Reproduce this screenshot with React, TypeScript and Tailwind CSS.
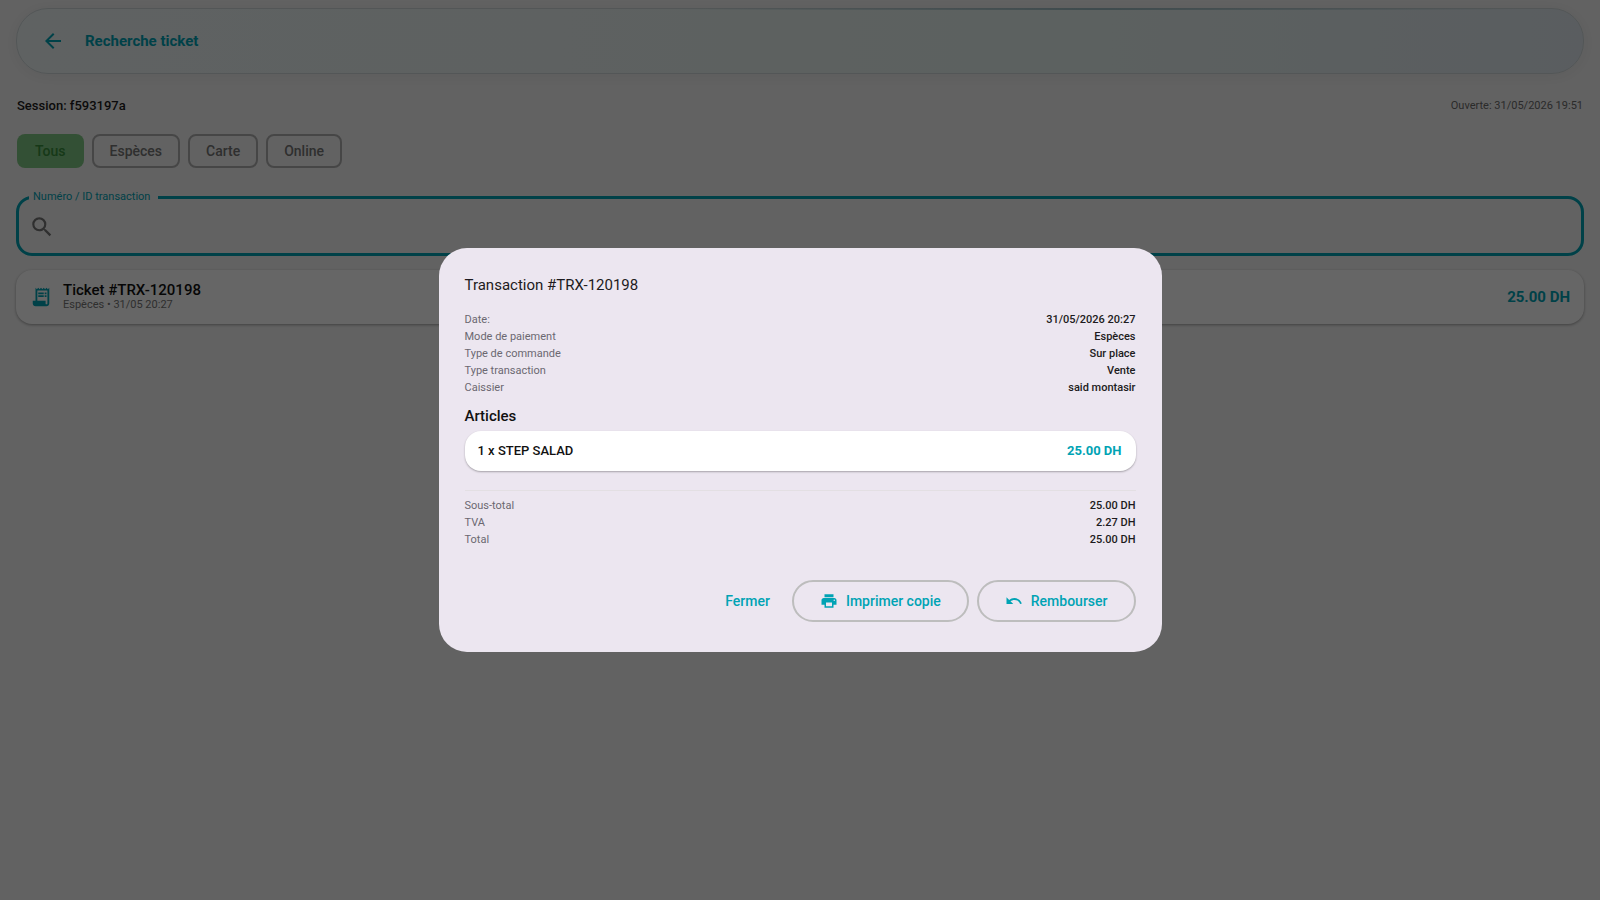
import React from "react";
import { MdArrowBack, MdPrint, MdReceiptLong, MdSearch, MdUndo } from "react-icons/md";

const filters = ["Tous", "Espèces", "Carte", "Online"];

const details = [
  ["Date:", "31/05/2026 20:27"],
  ["Mode de paiement", "Espèces"],
  ["Type de commande", "Sur place"],
  ["Type transaction", "Vente"],
  ["Caissier", "said montasir"],
];

const totals = [
  ["Sous-total", "25.00 DH"],
  ["TVA", "2.27 DH"],
  ["Total", "25.00 DH"],
];

function Rows({ rows }: { rows: string[][] }) {
  return (
    <dl className="text-[11px] leading-[17px]">
      {rows.map(([label, value]) => (
        <div key={label} className="flex justify-between">
          <dt className="text-[#6b6870]">{label}</dt>
          <dd className="font-medium text-[#1d1b20]">{value}</dd>
        </div>
      ))}
    </dl>
  );
}

function TransactionDialog() {
  return (
    <div className="fixed inset-0 z-10 flex items-center justify-center bg-black/60 p-4">
      <section
        role="dialog"
        aria-modal="true"
        aria-labelledby="dialog-title"
        className="w-full max-w-[723px] rounded-[28px] bg-[#ece6f0] px-[26px] pb-[30px] pt-[26px]"
      >
        <h2 id="dialog-title" className="text-[15px] leading-[22px] text-[#1d1b20]">
          Transaction #TRX-120198
        </h2>
        <div className="pt-[15px]">
          <Rows rows={details} />
        </div>
        <h3 className="pb-[5px] pt-[10px] text-[15px] font-medium leading-[20px] text-[#111111]">Articles</h3>
        <div className="flex h-10 items-center justify-between rounded-2xl bg-white pl-[13px] pr-[14px] text-[13px] shadow-[0_1px_2px_rgba(0,0,0,0.3)]">
          <span className="font-medium text-[#111111]">1 x STEP SALAD</span>
          <span className="font-bold text-[#00a3b4]">25.00 DH</span>
        </div>
        <hr className="mb-[6px] mt-[19px] border-[#e3dfe3]" />
        <Rows rows={totals} />
        <div className="flex items-center justify-end gap-2 pt-8 text-[14px] font-medium text-[#00a3b4]">
          <button className="h-[42px] px-[14px]">Fermer</button>
          <button className="flex h-[42px] items-center gap-2 rounded-full border-2 border-[#bdbdbd] px-[26px]">
            <MdPrint size={18} />
            Imprimer copie
          </button>
          <button className="flex h-[42px] items-center gap-2 rounded-full border-2 border-[#bdbdbd] px-[26px]">
            <MdUndo size={18} />
            Rembourser
          </button>
        </div>
      </section>
    </div>
  );
}

export default function App() {
  return (
    <div className="min-h-screen bg-[#f5f5f5] font-[Roboto,sans-serif] text-[#1d1b20]">
      <div className="px-4 pt-2">
        <header className="relative flex h-[66px] items-center gap-5 rounded-[32px] border border-[#cfd8da] bg-linear-to-r from-[#eef4f5] via-[#e6f2ef] via-70% to-[#e1e9f0] px-6 shadow-[0_2px_16px_rgba(0,0,0,0.06)]">
          <div className="absolute -top-px left-[42%] right-[4%] h-[2px] bg-linear-to-r from-transparent via-[#9dbbc2] to-transparent" />
          <button aria-label="Retour" className="text-[#00a3b4]">
            <MdArrowBack size={24} />
          </button>
          <h1 className="text-[15px] font-bold text-[#00a3b4]">Recherche ticket</h1>
        </header>

        <main>
          <div className="flex items-center justify-between px-px pt-[22px] leading-[20px]">
            <p className="text-[13px] font-medium">Session: f593197a</p>
            <p className="text-[11px] text-[#6b6b6b]">Ouverte: 31/05/2026 19:51</p>
          </div>

          <div className="flex gap-2 px-px pt-[18px]">
            {filters.map((name, i) => (
              <button
                key={name}
                className={
                  i === 0
                    ? "h-[34px] rounded-lg bg-[#81c784] px-[18px] text-[14px] font-medium text-[#388e3c]"
                    : "h-[34px] rounded-lg border-2 border-[#b0b0b0] px-4 text-[14px] font-medium text-[#757575]"
                }
              >
                {name}
              </button>
            ))}
          </div>

          <div className="pt-[21px]">
            <fieldset className="flex h-[67px] items-center rounded-2xl border-[3px] border-[#00a3b4] px-[10px]">
              <legend className="pl-1 pr-2 text-[11px] leading-[16px] text-[#00a3b4]">
                <label htmlFor="search">Numéro / ID transaction</label>
              </legend>
              <div className="flex w-full items-center gap-2 pb-[5px]">
                <MdSearch size={26} className="text-[#757575]" />
                <input id="search" type="text" className="h-8 flex-1 bg-transparent outline-none" />
              </div>
            </fieldset>
          </div>

          <article className="mt-[14px] flex h-[54px] items-center rounded-2xl bg-white px-[14px] shadow-[0_1px_3px_rgba(0,0,0,0.35)]">
            <MdReceiptLong size={22} className="text-[#00a3b4]" />
            <div className="flex-1 pl-[11px]">
              <h2 className="text-[15px] font-medium leading-[16px] text-[#111111]">Ticket #TRX-120198</h2>
              <p className="text-[11px] leading-[14px] text-[#757575]">Espèces • 31/05 20:27</p>
            </div>
            <span className="text-[15px] font-bold text-[#00a3b4]">25.00 DH</span>
          </article>
        </main>
      </div>
      <TransactionDialog />
    </div>
  );
}
